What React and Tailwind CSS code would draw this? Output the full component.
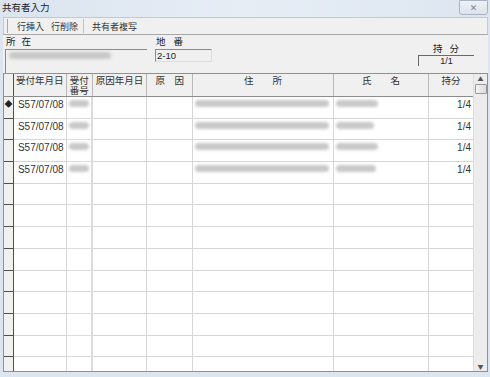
import React from 'react'

const font = { fontFamily: '"Noto Sans CJK JP", "DejaVu Sans", sans-serif' }
const latin = { fontFamily: '"Liberation Sans", "Noto Sans CJK JP", sans-serif' }

const cols = [
  { w: 'w-[53px]', label: '受付年月日' },
  { w: 'w-[26px]', label: '受付\n番号' },
  { w: 'w-[55px]', label: '原因年月日' },
  { w: 'w-[46px]', label: '原　因' },
  { w: 'w-[141px]', label: '住　　所' },
  { w: 'w-[96px]', label: '氏　　名' },
  { w: 'w-[44px]', label: '持分' },
]

const rows = [
  { date: 'S57/07/08', addr: 'w-[134px]', name: 'w-[42px]', share: '1/4', mark: true },
  { date: 'S57/07/08', addr: 'w-[134px]', name: 'w-[38px]', share: '1/4' },
  { date: 'S57/07/08', addr: 'w-[134px]', name: 'w-[42px]', share: '1/4' },
  { date: 'S57/07/08', addr: 'w-[134px]', name: 'w-[40px]', share: '1/4' },
]

const Blur = ({ className }) => (
  <div className={`h-[7px] bg-[#c8c8c8] blur-[1.5px] rounded-sm ${className}`} />
)

const Row = ({ row }) => (
  <div className="flex h-[21.7px] shrink-0">
    <div className="w-[10px] bg-[#f0f0f0] border-r border-b border-[#505050] flex items-start justify-center pt-[3px] text-[8px] leading-none">
      {row?.mark ? '◆' : ''}
    </div>
    <div className="w-[53px] border-r border-b border-[#d6d6d6] pl-[4px] pt-[2px] text-[10px] leading-[12px] text-[#333]" style={latin}>
      {row?.date}
    </div>
    <div className="w-[26px] border-r-2 border-b border-[#dcdcdc] pl-[2px] pt-[3px]">
      {row && <Blur className="w-[20px]" />}
    </div>
    <div className="w-[55px] border-r border-b border-[#d6d6d6]" />
    <div className="w-[46px] border-r border-b border-[#d6d6d6]" />
    <div className="w-[141px] border-r border-b border-[#d6d6d6] pl-[2px] pt-[3px]">
      {row && <Blur className={row.addr} />}
    </div>
    <div className="w-[96px] border-r border-b border-[#d6d6d6] pl-[2px] pt-[3px]">
      {row && <Blur className={row.name} />}
    </div>
    <div className="w-[44px] border-b border-[#d6d6d6] pr-[2px] pt-[2px] text-right text-[10px] leading-[12px] text-[#333]" style={latin}>
      {row?.share}
    </div>
  </div>
)

export default function App() {
  const all = [...rows, ...Array(9).fill(null)]
  return (
    <div className="w-[490px] h-[377px] flex flex-col bg-[#dde6f0] overflow-hidden text-[#222]" style={font}>
      {/* title bar */}
      <div className="h-[17px] shrink-0 flex items-start justify-between bg-gradient-to-r from-[#dbe4ef] via-[#e6edf5] to-[#dde6f0]">
        <span className="text-[9.5px] leading-none pl-[2px] pt-[3px]">共有者入力</span>
        <div className="w-[29px] h-[15px] mr-[2px] border border-[#aab4c2] rounded-b-[3px] bg-gradient-to-b from-[#eef2f7] to-[#dbe3ec] flex items-center justify-center text-[9px] text-[#7a8594] leading-none">
          ✕
        </div>
      </div>

      <div className="flex-1 flex flex-col ml-[3px] mr-[2px] mb-[5px] bg-[#f0f0f0] min-h-0">
        {/* toolbar */}
        <div className="h-[18px] shrink-0 flex items-center border border-[#c8c8c8] border-b-[#a8a8a8] text-[9px] leading-none text-[#333]">
          <div className="w-px h-[14px] bg-[#a8a8a8] ml-[3px]" />
          <span className="ml-[9px]">行挿入</span>
          <span className="ml-[7px]">行削除</span>
          <div className="w-px h-[14px] bg-[#c0c0c0] ml-[5px]" />
          <span className="ml-[8px]">共有者複写</span>
        </div>

        {/* header form */}
        <div className="h-[38px] shrink-0 flex text-[9.5px] leading-none">
          <div className="ml-[2px] flex flex-col">
            <span className="pt-[2px] pl-[1px] tracking-[6px]">所在</span>
            <div className="mt-[2px] w-[142px] h-[24px] border-l border-t border-[#8a8a8a] pl-[3px] pt-[2px]">
              <Blur className="w-[102px]" />
            </div>
          </div>
          <div className="ml-[8px] flex flex-col">
            <span className="pt-[2px] pl-[1px] tracking-[8px]">地番</span>
            <div className="mt-[2px] w-[57px] h-[13px] border border-[#8a8a8a] border-r-[#dcdcdc] border-b-[#dcdcdc] text-[9.5px] leading-[11px] pl-[1px]" style={latin}>
              2-10
            </div>
          </div>
          <div className="ml-auto mr-[14px] flex flex-col items-center">
            <span className="pt-[9px] h-[20px] tracking-[7px] pl-[7px]">持分</span>
            <div className="w-[56px] h-[11px] border-l border-t border-[#6a6a6a] text-[9px] leading-[10px] text-center" style={latin}>
              1/1
            </div>
          </div>
        </div>

        {/* grid */}
        <div className="flex-1 min-h-0 flex border border-[#909090] bg-white">
          <div className="flex-1 flex flex-col min-w-0 overflow-hidden">
            <div className="flex h-[23px] shrink-0 bg-[#f0f0f0] border-b border-[#8c8c8c] text-[9.5px] leading-[9.5px] text-[#333]">
              <div className="w-[10px] border-r border-[#505050]" />
              {cols.map((c, i) => (
                <div
                  key={i}
                  className={`${c.w} ${i < cols.length - 1 ? 'border-r border-[#b8b8b8]' : ''} pt-[2px] text-center whitespace-pre`}
                >
                  {c.label}
                </div>
              ))}
            </div>
            {all.map((r, i) => (
              <Row key={i} row={r} />
            ))}
          </div>
          {/* scrollbar */}
          <div className="w-[14px] shrink-0 bg-[#ececec] border-l border-[#dcdcdc] flex flex-col items-center">
            <div className="h-[9px] text-[6px] leading-[9px] text-[#555]">▲</div>
            <div className="w-[12px] h-[10px] mt-[1px] border border-[#9a9a9a] bg-gradient-to-r from-[#f4f4f4] to-[#dcdcdc] rounded-[1px]" />
            <div className="flex-1" />
            <div className="h-[9px] text-[6px] leading-[9px] text-[#555]">▼</div>
          </div>
        </div>
      </div>
    </div>
  )
}
